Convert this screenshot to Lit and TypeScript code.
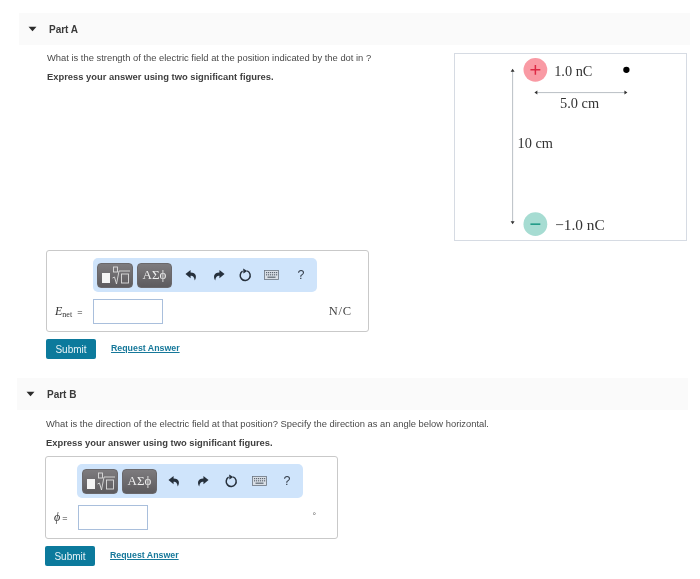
import { LitElement, html, css, svg } from "lit";
import { customElement, property } from "lit/decorators.js";

const caret = html`<svg class="caret" width="9" height="6" viewBox="0 0 9 6"><path d="M0.5 0.8h8L4.5 5.2z" fill="#2b2b2b"/></svg>`;

@customElement("answer-box")
class AnswerBox extends LitElement {
  @property({ reflect: true }) variant = "a";
  static styles = css`
    :host { display: block; font-family: "Liberation Sans", Arial, sans-serif; }
    .box { box-sizing: border-box; border: 1px solid #c9c9c9; border-radius: 3px; background: #fff; display: flex; flex-direction: column; }
    :host([variant="a"]) .box { width: 323px; height: 82px; padding: 7px 16px 0 8px; }
    :host([variant="b"]) .box { width: 293px; height: 83px; padding: 7px 21px 0 8px; }
    .tools { box-sizing: border-box; height: 34px; background: #cfe4fb; border-radius: 5px; display: flex; align-items: center; padding-left: 4px; }
    :host([variant="a"]) .tools { width: 224px; margin-left: 38px; }
    :host([variant="b"]) .tools { width: 226px; margin-left: 23px; padding-left: 5px; }
    .btn { height: 25px; border-radius: 4px; background: linear-gradient(#7d7b7e, #5d5b5e); border: 1px solid #6a686b; box-sizing: border-box; display: flex; align-items: center; justify-content: center; color: #eee; }
    .tpl { width: 36px; margin-right: 4px; }
    .greek { width: 35px; font: 13px "Liberation Serif", serif; }
    :host([variant="a"]) .greek { margin-right: 6px; }
    :host([variant="b"]) .greek { margin-right: 3px; }
    .ic { width: 27px; display: flex; justify-content: center; align-items: center; }
    :host([variant="b"]) .ic { width: 28.5px; }
    .help { font-size: 12.5px; color: #333d4a; width: 32px; text-align: center; }
    :host([variant="b"]) .help { width: 26px; }
    .row { display: flex; align-items: center; height: 25px; margin-top: 7px; }
    .label { display: flex; align-items: baseline; color: #333; font: 10px "Liberation Serif", serif; }
    :host([variant="a"]) .label { width: 38px; }
    :host([variant="b"]) .label { width: 24px; }
    .sym { font-style: italic; font-size: 12px; }
    .sub { font-size: 8px; position: relative; top: 2px; margin-right: 5px; }
    .eq { font: 9px "Liberation Sans", sans-serif; }
    .phi { margin-right: 2px; font-size: 12px; }
    .input { box-sizing: border-box; width: 70px; height: 25px; border: 1.5px solid #a9bfdc; background: #fff; }
    .unit { margin-left: auto; font: 12.5px "Liberation Serif", serif; color: #444; letter-spacing: 0.8px; }
    .deg { margin-left: auto; font: 9px "Liberation Sans", sans-serif; color: #666; position: relative; top: -2px; }
    .actions { display: flex; align-items: center; margin-top: 7px; }
    .submit { width: 50px; height: 20px; border: none; border-radius: 2px; background: #0c7a9c; color: #e8f3f7; font: 10px "Liberation Sans", sans-serif; padding: 0; }
    .req { margin-left: 15px; color: #16789a; font-size: 8.8px; font-weight: 700; text-decoration: underline; position: relative; top: -1px; }
  `;
  render() {
    const a = this.variant === "a";
    return html`
      <div class="box">
        <div class="tools">
          <div class="btn tpl">
            <svg width="34" height="23" viewBox="0 0 34 23" fill="none">
              <rect x="4" y="9" width="8" height="10" fill="#f4f4f4"/>
              <rect x="15.5" y="3" width="4" height="5" stroke="#ddd" stroke-width="0.9"/>
              <path d="M14.5 14l2 -1 2 7 2.5 -13h11" stroke="#ddd" stroke-width="0.9"/>
              <rect x="23.5" y="10" width="7" height="9" stroke="#ddd" stroke-width="0.9"/>
            </svg>
          </div>
          <div class="btn greek">ΑΣϕ</div>
          <div class="ic"><svg width="13" height="13" viewBox="0 0 14 14"><path d="M6 1L0.5 5.5 6 10V7.2C8.5 7.2 10 8.5 10.5 12.5 12.8 9 12.5 3.8 6 3.8Z" fill="#26303c"/></svg></div>
          <div class="ic"><svg width="13" height="13" viewBox="0 0 14 14"><path d="M8 1L13.5 5.5 8 10V7.2C5.5 7.2 4 8.5 3.5 12.5 1.2 9 1.5 3.8 8 3.8Z" fill="#26303c"/></svg></div>
          <div class="ic"><svg width="14" height="14" viewBox="0 0 14 14" fill="none"><path d="M4.6 3.2A5 5 0 1 0 9.2 2.9" stroke="#26303c" stroke-width="1.5"/><path d="M5.2 0.4L9.3 2.9 5.4 5.4z" fill="#26303c"/></svg></div>
          <div class="ic"><svg width="15" height="10" viewBox="0 0 15 10"><rect x="0.5" y="0.5" width="14" height="9" fill="#d9dfe6" stroke="#6b7480" stroke-width="0.8"/>
            ${[2, 4, 6, 8, 10, 12].map((x) => svg`<rect x="${x}" y="2" width="1.2" height="1.2" fill="#5e6772"/><rect x="${x}" y="4.2" width="1.2" height="1.2" fill="#5e6772"/>`)}
            <rect x="3.5" y="6.6" width="8" height="1.2" fill="#5e6772"/></svg></div>
          <div class="help">?</div>
        </div>
        <div class="row">
          <div class="label">
            ${a
              ? html`<span class="sym">E</span><span class="sub">net</span><span class="eq">=</span>`
              : html`<span class="sym phi">ϕ</span><span class="eq">=</span>`}
          </div>
          <div class="input"></div>
          ${a ? html`<span class="unit">N/C</span>` : html`<span class="deg">°</span>`}
        </div>
      </div>
      <div class="actions">
        <button class="submit">Submit</button>
        <span class="req">Request Answer</span>
      </div>
    `;
  }
}

@customElement("app-root")
class AppRoot extends LitElement {
  static styles = css`
    :host { display: block; width: 700px; height: 579px; overflow: hidden; background: #fff; padding-top: 13px; box-sizing: border-box; font-family: "Liberation Sans", Arial, sans-serif; color: #4a4a4a; filter: blur(0.35px); }
    .head { height: 32px; background: #fafafa; display: flex; align-items: center; font-size: 10px; font-weight: 700; color: #3a3a3a; }
    .caret { flex: none; }
    .a { margin-left: 19px; }
    .a .head { width: 671px; padding-left: 9px; box-sizing: border-box; }
    .a .caret { margin-right: 12px; }
    .b { margin-left: 17px; margin-top: 19px; }
    .b .head { width: 671px; padding-left: 9px; box-sizing: border-box; }
    .b .caret { margin-right: 12px; }
    .body { display: flex; align-items: flex-start; }
    .main { flex: none; }
    .a .main { width: 408px; padding-left: 28px; margin-right: -1px; }
    .b .main { padding-left: 29px; }
    p { margin: 0; font-size: 9.4px; line-height: 12px; }
    .q { margin-top: 7px; }
    .b .q { margin-top: 8px; }
    .em { font-weight: 700; color: #3f3f3f; margin-top: 7px; }
    .a answer-box { margin: 167px 0 0 -1px; }
    .b answer-box { margin: 7px 0 0 -1px; }
    .fig { flex: none; box-sizing: border-box; width: 233px; height: 188px; margin-top: 8px; border: 1px solid #d6dbe3; display: block; }
    text { font-family: "Liberation Serif", serif; fill: #333; font-size: 14.5px; }
    .neg { font-size: 15.5px; }
  `;
  render() {
    return html`
      <section class="a">
        <div class="head">${caret}<span>Part A</span></div>
        <div class="body">
          <div class="main">
            <p class="q">What is the strength of the electric field at the position indicated by the dot in ?</p>
            <p class="em">Express your answer using two significant figures.</p>
            <answer-box variant="a"></answer-box>
          </div>
          <svg class="fig" viewBox="455 53 233 188">
            <path d="M513 70V223M536 92H628" stroke="#a8aeb6" stroke-width="0.8"/>
            <path d="M513 68l-2 3h4zM513 225l-2 -3h4zM535 92l3 -2v4zM629 92l-3 -2v4z" fill="#333"/>
            <circle cx="536" cy="69" r="12" fill="#f99aa4"/>
            <path d="M531 69h10M536 64v10" stroke="#dd2a45" stroke-width="1.5"/>
            <text x="555" y="75">1.0 nC</text>
            <circle cx="628" cy="69" r="3.2" fill="#000"/>
            <text x="561" y="108">5.0 cm</text>
            <text x="518" y="148">10 cm</text>
            <circle cx="536" cy="225" r="12" fill="#a6dcd2"/>
            <path d="M531 225h10" stroke="#1f9a86" stroke-width="1.6"/>
            <text class="neg" x="556" y="231">−1.0 nC</text>
          </svg>
        </div>
      </section>
      <section class="b">
        <div class="head">${caret}<span>Part B</span></div>
        <div class="main">
          <p class="q">What is the direction of the electric field at that position? Specify the direction as an angle below horizontal.</p>
          <p class="em">Express your answer using two significant figures.</p>
          <answer-box variant="b"></answer-box>
        </div>
      </section>
    `;
  }
}
